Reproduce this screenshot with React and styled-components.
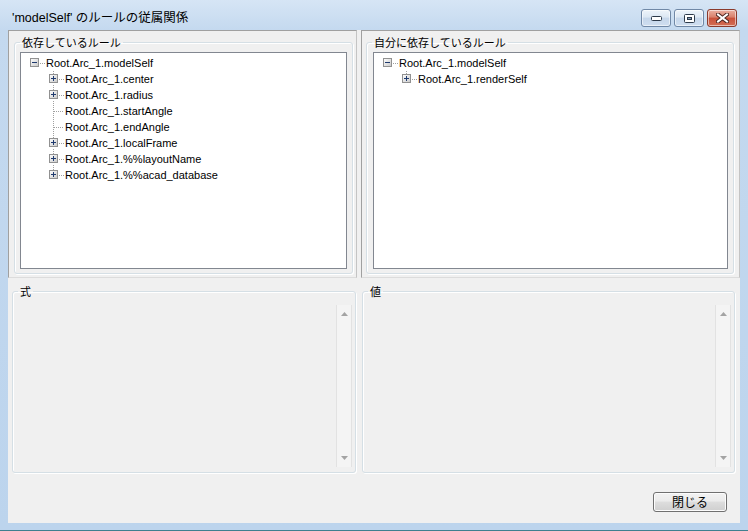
import React from "react";
import styled, { createGlobalStyle } from "styled-components";

const GlobalStyle = createGlobalStyle`
  html, body { margin: 0; padding: 0; background: #ffffff; }
  body {
    font-family: "Liberation Sans", "Noto Sans CJK JP", sans-serif;
    font-size: 11px;
    color: #000;
  }
  * { box-sizing: border-box; }
`;

const leftTree = [
  { level: 0, text: "Root.Arc_1.modelSelf", exp: "minus" },
  { level: 1, text: "Root.Arc_1.center", exp: "plus", above: true, below: true },
  { level: 1, text: "Root.Arc_1.radius", exp: "plus", above: true, below: true },
  { level: 1, text: "Root.Arc_1.startAngle", above: true, below: true },
  { level: 1, text: "Root.Arc_1.endAngle", above: true, below: true },
  { level: 1, text: "Root.Arc_1.localFrame", exp: "plus", above: true, below: true },
  { level: 1, text: "Root.Arc_1.%%layoutName", exp: "plus", above: true, below: true },
  { level: 1, text: "Root.Arc_1.%%acad_database", exp: "plus", above: true },
];

const rightTree = [
  { level: 0, text: "Root.Arc_1.modelSelf", exp: "minus" },
  { level: 1, text: "Root.Arc_1.renderSelf", exp: "plus", above: true },
];

const Window = styled.div`
  width: 748px;
  height: 531px;
  display: flex;
  flex-direction: column;
  background: linear-gradient(#d6e5f5, #c4d9ef 30px, #bcd4ed);
  border-bottom: 1px solid #3f7f8f;
`;

const TitleBar = styled.div`
  height: 30px;
  display: flex;
  align-items: flex-start;
  justify-content: space-between;
  padding: 0 11px 0 12px;
`;

const Title = styled.div`
  font-size: 12.5px;
  line-height: 14px;
  margin-top: 11px;
  color: #000;
`;

const Captions = styled.div`
  display: flex;
  gap: 3px;
  margin-top: 9px;
`;

const CapButton = styled.div`
  width: 30px;
  height: 18px;
  border-radius: 3px;
  display: flex;
  align-items: center;
  justify-content: center;
  border: 1px solid ${(p) => (p.$close ? "#8a3a2c" : "#7088a6")};
  background: ${(p) =>
    p.$close
      ? "linear-gradient(#eab0a2, #d9806b 45%, #c9503a 50%, #d36f55)"
      : "linear-gradient(#eef4fa, #dce7f3 45%, #c5d6ea 50%, #cfdef0)"};
  box-shadow: inset 0 0 0 1px rgba(255, 255, 255, 0.55);
`;

const Client = styled.div`
  flex: 1;
  margin: 0 8px 7px 8px;
  background: #f0f0f0;
  display: flex;
  flex-direction: column;
`;

const Split = styled.div`
  display: grid;
  grid-template-columns: 349px 379px;
  column-gap: 4px;
  height: ${(p) => p.$h}px;
`;

const Panel = styled.div`
  display: flex;
  flex-direction: column;
  padding: ${(p) => p.$pad};
  border: ${(p) => (p.$framed ? "1px solid" : "none")};
  border-color: #a0a0a0 #c4c4c4 #dcdcdc #a0a0a0;
`;

const Group = styled.fieldset`
  flex: 1;
  min-width: 0;
  margin: 0;
  padding: ${(p) => p.$pad || "3px 5px 4px 5px"};
  display: flex;
  flex-direction: column;
  border: 1px solid #d5dfe5;
  border-radius: 3px;
  box-shadow: inset 1px 1px 0 #ffffff, 1px 1px 0 #ffffff;
`;

const Legend = styled.legend`
  padding: 0 2px;
  margin-left: ${(p) => p.$shift || 0}px;
  font-family: "Noto Sans CJK JP", sans-serif;
  font-size: 11px;
  line-height: 14px;
  color: #000;
`;

const Tree = styled.div`
  flex: 1;
  background: #ffffff;
  border: 1px solid #828790;
  padding-top: 2px;
`;

const Row = styled.div`
  height: 16px;
  display: flex;
  align-items: center;
  padding-left: ${(p) => 5 + p.$level * 19}px;
`;

const Label = styled.span`
  font-family: "Liberation Sans", sans-serif;
  font-size: 11px;
  line-height: 16px;
  margin-left: 1px;
  white-space: nowrap;
`;

const Memo = styled.div`
  flex: 1;
  display: flex;
  justify-content: flex-end;
  padding: 4px 0 1px 0;
`;

const ScrollTrack = styled.div`
  width: 16px;
  display: flex;
  flex-direction: column;
  justify-content: space-between;
  align-items: center;
  padding: 7px 0 7px 0;
  background: #f4f4f4;
  border-left: 1px solid #e2e2e2;
  border-right: 1px solid #e2e2e2;
`;

const Footer = styled.div`
  flex: 1;
  display: flex;
  justify-content: flex-end;
  align-items: flex-start;
  padding: 17px 13px 0 0;
`;

const Button = styled.button`
  width: 74px;
  height: 20px;
  border: 1px solid #707070;
  border-radius: 3px;
  background: linear-gradient(#f2f2f2, #ebebeb 45%, #dddddd 50%, #cfcfcf);
  box-shadow: inset 0 0 0 1px #fcfcfc;
  font-family: "Noto Sans CJK JP", sans-serif;
  font-size: 12px;
  line-height: 16px;
  padding: 0;
  color: #000;
`;

function Connector({ exp, above, below }) {
  const dots = [];
  const start = exp ? 14 : 9;
  for (let x = start; x <= 18; x += 2) {
    dots.push(<rect key={"h" + x} x={x} y={8} width={1} height={1} />);
  }
  const y0 = above ? 0 : 8;
  const y1 = below ? 15 : 8;
  for (let y = y0; y <= y1; y += 2) {
    if (exp && y >= 3 && y <= 12) continue;
    dots.push(<rect key={"v" + y} x={8} y={y} width={1} height={1} />);
  }
  return (
    <svg width="19" height="16" viewBox="0 0 19 16">
      <defs>
        <linearGradient id="boxfill" x1="0" y1="0" x2="1" y2="1">
          <stop offset="0" stopColor="#ffffff" />
          <stop offset="1" stopColor="#c8c8c8" />
        </linearGradient>
      </defs>
      <g fill="#a0a0a0">{dots}</g>
      {exp && (
        <g>
          <rect x="4.5" y="3.5" width="8" height="8" fill="url(#boxfill)" stroke="#919191" />
          <rect x="6" y="7" width="5" height="1" fill="#1f3a6e" />
          {exp === "plus" && <rect x="8" y="5" width="1" height="5" fill="#1f3a6e" />}
        </g>
      )}
    </svg>
  );
}

function TreeView({ items }) {
  return (
    <Tree>
      {items.map((it, i) => (
        <Row key={i} $level={it.level}>
          <Connector exp={it.exp} above={it.above} below={it.below} />
          <Label>{it.text}</Label>
        </Row>
      ))}
    </Tree>
  );
}

function Arrow({ down }) {
  return (
    <svg width="7" height="4" viewBox="0 0 7 4">
      <path d={down ? "M0 0H7L3.5 4Z" : "M0 4H7L3.5 0Z"} fill="#a3a3a3" />
    </svg>
  );
}

function MemoField() {
  return (
    <Memo>
      <ScrollTrack>
        <Arrow />
        <Arrow down />
      </ScrollTrack>
    </Memo>
  );
}

export default function App() {
  return (
    <>
      <GlobalStyle />
      <Window>
        <TitleBar>
          <Title>'modelSelf' のルールの従属関係</Title>
          <Captions>
            <CapButton>
              <svg width="11" height="5" viewBox="0 0 11 5">
                <rect x="0.5" y="0.5" width="10" height="4" rx="1" fill="#ffffff" stroke="#2d3a4a" />
              </svg>
            </CapButton>
            <CapButton>
              <svg width="11" height="9" viewBox="0 0 11 9">
                <rect x="0.5" y="0.5" width="10" height="8" rx="1" fill="#ffffff" stroke="#2d3a4a" />
                <rect x="3.5" y="3.5" width="4" height="2" fill="#8aa1bd" stroke="#2d3a4a" />
              </svg>
            </CapButton>
            <CapButton $close>
              <svg width="13" height="10" viewBox="0 0 13 10">
                <path d="M2 1.5L11 8.5M11 1.5L2 8.5" stroke="#4a2420" strokeWidth="4" strokeLinecap="square" />
                <path d="M2 1.5L11 8.5M11 1.5L2 8.5" stroke="#ffffff" strokeWidth="2" strokeLinecap="square" />
              </svg>
            </CapButton>
          </Captions>
        </TitleBar>
        <Client>
          <Split $h={248}>
            <Panel $framed $pad="4px 3px 3px 5px">
              <Group>
                <Legend>依存しているルール</Legend>
                <TreeView items={leftTree} />
              </Group>
            </Panel>
            <Panel $framed $pad="4px 5px 3px 4px">
              <Group $pad="3px 5px 4px 6px">
                <Legend $shift={-1}>自分に依存しているルール</Legend>
                <TreeView items={rightTree} />
              </Group>
            </Panel>
          </Split>
          <Split $h={197}>
            <Panel $pad="6px 1px 2px 4px">
              <Group $pad="3px 3px 4px 5px">
                <Legend>式</Legend>
                <MemoField />
              </Group>
            </Panel>
            <Panel $pad="6px 5px 2px 1px">
              <Group $pad="3px 3px 4px 5px">
                <Legend>値</Legend>
                <MemoField />
              </Group>
            </Panel>
          </Split>
          <Footer>
            <Button>閉じる</Button>
          </Footer>
        </Client>
      </Window>
    </>
  );
}
